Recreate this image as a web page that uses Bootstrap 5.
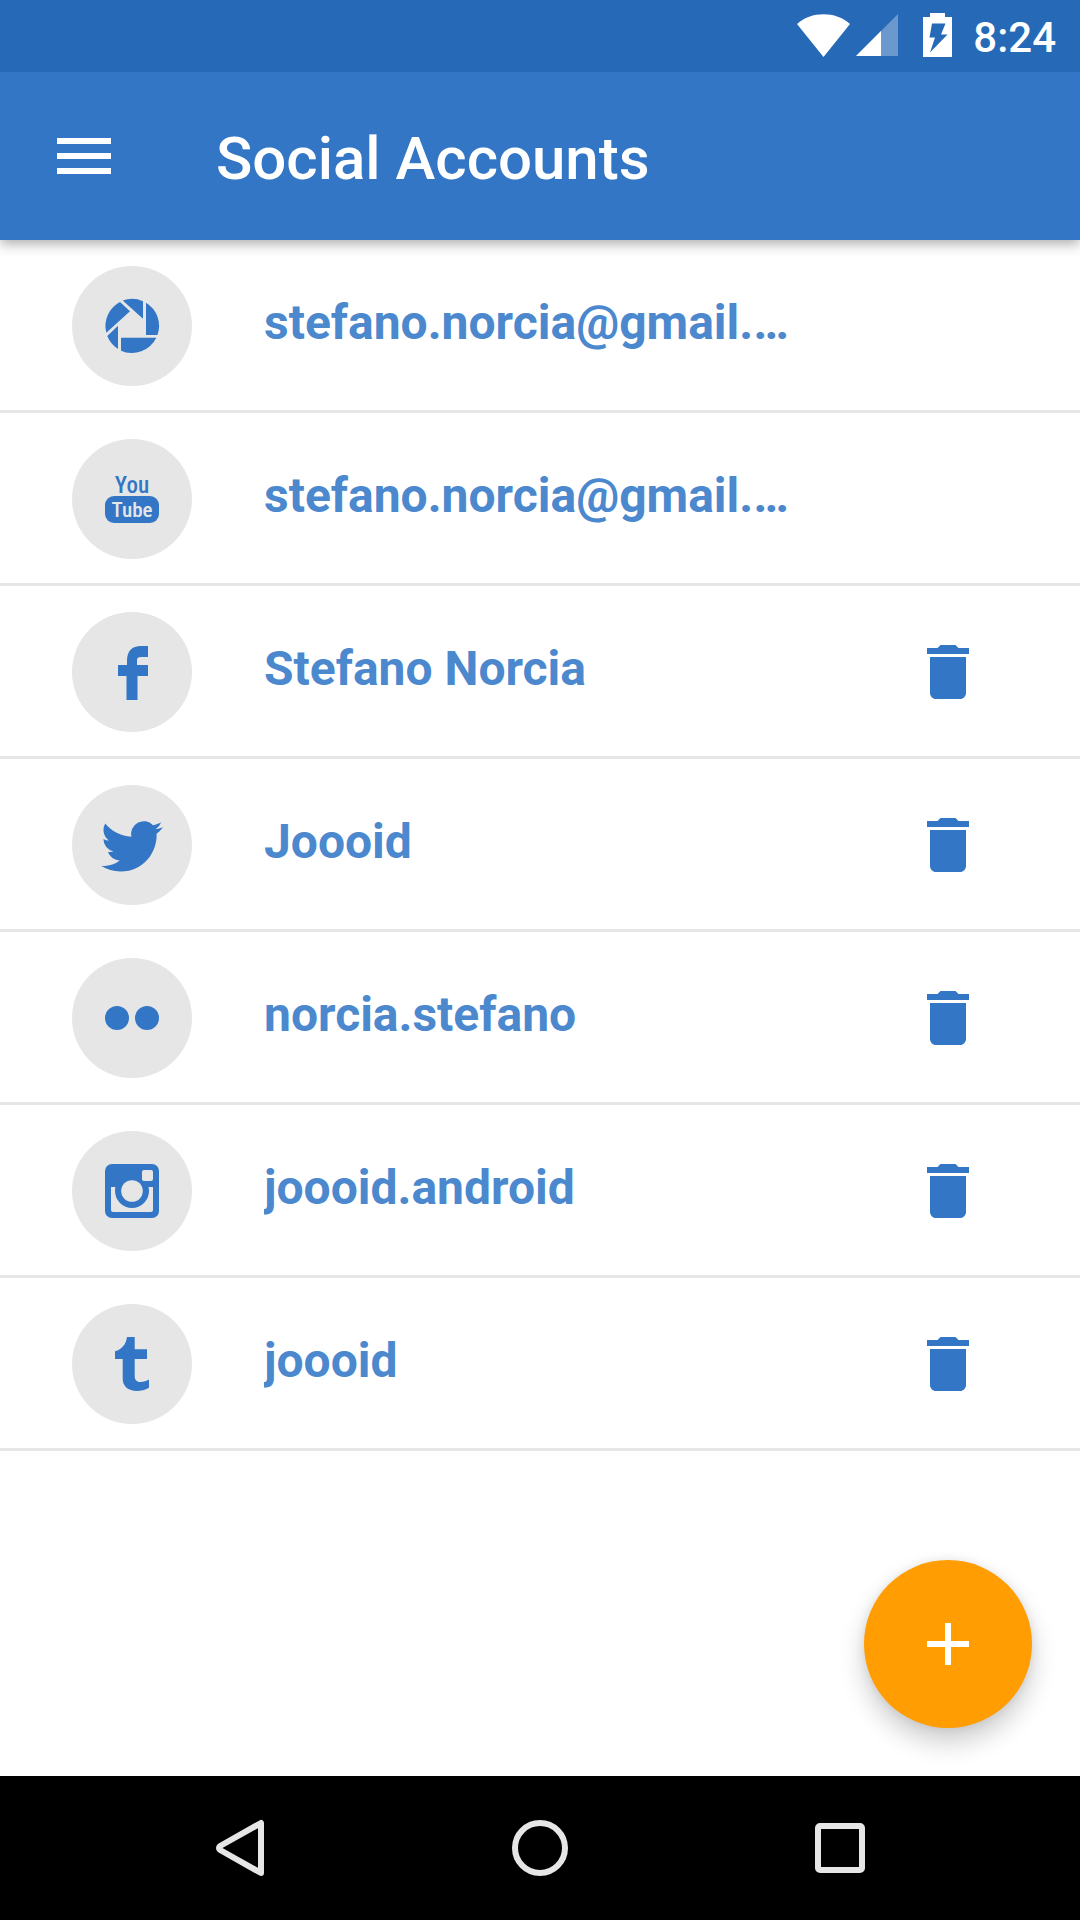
<!DOCTYPE html>
<html lang="en">
<head>
<meta charset="utf-8">
<meta name="viewport" content="width=device-width, initial-scale=1">
<title>Social Accounts</title>
<link href="https://cdn.jsdelivr.net/npm/bootstrap@5.3.0/dist/css/bootstrap.min.css" rel="stylesheet">
<script src="https://cdn.jsdelivr.net/npm/bootstrap@5.3.0/dist/js/bootstrap.bundle.min.js" defer></script>
<style>
  :root { --brand: #3276c5; --brand-dark: #2669b7; --disc: #e6e6e6; }
  body { font-family: Roboto, "Noto Sans", sans-serif; background: #fff; }
  svg { display: block; flex: none; }
  .status-bar { height: 72px; padding: 0 24px 2px; background: var(--brand-dark); color: #fff; z-index: 3; }
  .status-time { font-size: 42px; font-weight: 500; line-height: 48px; padding-top: 5px; margin-left: 21px; }
  .status-battery { margin-left: 25px; }
  .status-signal { margin-left: 6px; }
  .app-bar { height: 168px; padding: 0 48px; background: var(--brand); color: #fff; box-shadow: 0 4px 12px rgba(0,0,0,.32); z-index: 2; }
  .app-title { font-size: 60px; font-weight: 500; line-height: 72px; margin: 0; padding-top: 5px; }
  .icon-btn { background: none; border: 0; padding: 0; color: inherit; }
  .menu-btn { width: 72px; margin-right: 96px; }
  .list-group > .list-group-item.account-row { padding: 26px 60px 24px 72px; gap: 72px; border-width: 0 0 3px; border-color: #e6e6e6; background: #fff; }
  .account-disc { width: 120px; height: 120px; background: var(--disc); color: var(--brand); flex: none; }
  .account-name { font-size: 48px; font-weight: 700; line-height: 60px; color: #4b88ce; padding-bottom: 6px; min-width: 0; }
  .account-action { width: 144px; height: 120px; color: var(--brand); flex: none; }
  .add-btn { right: 48px; bottom: 48px; width: 168px; height: 168px; background: #ff9d03; color: #fff; box-shadow: 0 14px 26px rgba(0,0,0,.2), 0 0 10px rgba(0,0,0,.08); }
  .system-nav { height: 144px; padding: 0 90px; background: #000; color: #e6e6e6; }
</style>
</head>
<body>
<svg width="0" height="0" class="position-absolute" aria-hidden="true">
  <symbol id="trash" viewBox="0 0 24 24"><path fill="currentColor" d="M6 19c0 1.1.9 2 2 2h8c1.1 0 2-.9 2-2V7H6v12zM19 4h-3.5l-1-1h-5l-1 1H5v2h14V4z"/></symbol>
</svg>
<div class="d-flex flex-column min-vh-100">

  <div class="status-bar position-relative d-flex align-items-center justify-content-end">
    <svg width="53" height="43" viewBox="0 0 53 43" role="img" aria-label="Wi-Fi"><path fill="#fff" d="M0 10C14-3 39-3 53 10L26.500 43Z"/></svg>
    <svg class="status-signal" width="42" height="42" viewBox="0 0 42 42" role="img" aria-label="Signal"><path fill="#fff" opacity=".32" d="M42 0V42H0Z"/><path fill="#fff" d="M25 17V42H0Z"/></svg>
    <svg class="status-battery" width="29" height="44" viewBox="0 0 29 44" role="img" aria-label="Battery charging"><path fill="#fff" d="M7 0H22V4H29V44H0V4H7Z"/><path fill="#2669b7" d="M9 10.500H22.500L18 21.500H24.500L7 39.500L12 24.500H6.500Z"/></svg>
    <span class="status-time">8:24</span>
  </div>

  <header class="app-bar d-flex align-items-center position-relative">
    <button type="button" class="icon-btn menu-btn" aria-label="Menu">
      <svg width="72" height="72" viewBox="0 0 24 24"><path fill="currentColor" d="M3 18h18v-2H3v2zm0-5h18v-2H3v2zm0-7v2h18V6H3z"/></svg>
    </button>
    <h1 class="app-title text-truncate">Social Accounts</h1>
  </header>

  <main class="flex-grow-1 position-relative">
    <ul class="list-group list-group-flush">
      <li class="list-group-item account-row d-flex align-items-center">
        <div class="account-disc rounded-circle">
          <svg width="120" height="120" viewBox="0 0 120 120" role="img" aria-label="Picasa" fill="currentColor">
            <path d="M48 36L58 45.300L34.300 66.700A27 27 0 0 1 48 36Z"/>
            <path d="M50.700 34.600A27 27 0 0 1 71 35.300V52.700Z"/>
            <path d="M74 36.800A27 27 0 0 1 85.500 69H74Z"/>
            <path d="M49 71.700H84.300A27 27 0 0 1 49 84.700Z"/>
            <path d="M46 59.700V83A27 27 0 0 1 35.300 70Z"/>
          </svg>
        </div>
        <div class="account-name text-truncate flex-grow-1">stefano.norcia@gmail.…</div>
        <div class="account-action"></div>
      </li>
      <li class="list-group-item account-row d-flex align-items-center">
        <div class="account-disc rounded-circle">
          <svg width="120" height="120" viewBox="0 0 120 120" role="img" aria-label="YouTube" font-family="'Roboto Condensed', 'Open Sans Condensed', Roboto, sans-serif" font-weight="500" text-anchor="middle">
            <text x="60" y="54" font-size="23" fill="currentColor">You</text>
            <rect x="33" y="57" width="54" height="27" rx="9" fill="currentColor"/>
            <text x="60" y="78" font-size="21" fill="#e6e6e6">Tube</text>
          </svg>
        </div>
        <div class="account-name text-truncate flex-grow-1">stefano.norcia@gmail.…</div>
        <div class="account-action"></div>
      </li>
      <li class="list-group-item account-row d-flex align-items-center">
        <div class="account-disc rounded-circle">
          <svg width="120" height="120" viewBox="0 0 120 120" role="img" aria-label="Facebook" fill="currentColor"><path d="M54.500 88V64H46V53H55V49C55 39 60 34 69 34H76V45H69C66 45 65 46 65 48V53H76V64H65.500V88Z"/></svg>
        </div>
        <div class="account-name text-truncate flex-grow-1">Stefano Norcia</div>
        <button type="button" class="icon-btn account-action d-flex align-items-center justify-content-center" aria-label="Delete Stefano Norcia"><svg width="72" height="72"><use href="#trash"/></svg></button>
      </li>
      <li class="list-group-item account-row d-flex align-items-center">
        <div class="account-disc rounded-circle">
          <svg width="120" height="120" viewBox="0 0 120 120" role="img" aria-label="Twitter" fill="currentColor"><path transform="translate(29 30.400) scale(2.580)" d="M23.953 4.570a10 10 0 01-2.825.775 4.958 4.958 0 002.163-2.723c-.951.555-2.005.959-3.127 1.184a4.920 4.920 0 00-8.384 4.482C7.690 8.095 4.067 6.130 1.640 3.162a4.822 4.822 0 00-.666 2.475c0 1.710.870 3.213 2.188 4.096a4.904 4.904 0 01-2.228-.616v.060a4.923 4.923 0 003.946 4.827 4.996 4.996 0 01-2.212.085 4.936 4.936 0 004.604 3.417 9.867 9.867 0 01-6.102 2.105c-.390 0-.779-.023-1.170-.067a13.995 13.995 0 007.557 2.209c9.053 0 13.998-7.496 13.998-13.985 0-.210 0-.420-.015-.630A9.935 9.935 0 0024 4.590z"/></svg>
        </div>
        <div class="account-name text-truncate flex-grow-1">Joooid</div>
        <button type="button" class="icon-btn account-action d-flex align-items-center justify-content-center" aria-label="Delete Joooid"><svg width="72" height="72"><use href="#trash"/></svg></button>
      </li>
      <li class="list-group-item account-row d-flex align-items-center">
        <div class="account-disc rounded-circle">
          <svg width="120" height="120" viewBox="0 0 120 120" role="img" aria-label="Flickr" fill="currentColor"><circle cx="45" cy="60" r="12"/><circle cx="75" cy="60" r="12"/></svg>
        </div>
        <div class="account-name text-truncate flex-grow-1">norcia.stefano</div>
        <button type="button" class="icon-btn account-action d-flex align-items-center justify-content-center" aria-label="Delete norcia.stefano"><svg width="72" height="72"><use href="#trash"/></svg></button>
      </li>
      <li class="list-group-item account-row d-flex align-items-center">
        <div class="account-disc rounded-circle">
          <svg width="120" height="120" viewBox="0 0 120 120" role="img" aria-label="Instagram" fill="currentColor">
            <rect x="33" y="33" width="54" height="54" rx="7"/>
            <path fill="#e6e6e6" d="M39 56H81V79Q81 81 79 81H41Q39 81 39 79Z"/>
            <circle cx="60" cy="60" r="17"/>
            <circle cx="60" cy="60" r="10.800" fill="#e6e6e6"/>
            <rect x="70" y="39" width="11" height="11" rx="2" fill="#e6e6e6"/>
          </svg>
        </div>
        <div class="account-name text-truncate flex-grow-1">joooid.android</div>
        <button type="button" class="icon-btn account-action d-flex align-items-center justify-content-center" aria-label="Delete joooid.android"><svg width="72" height="72"><use href="#trash"/></svg></button>
      </li>
      <li class="list-group-item account-row d-flex align-items-center">
        <div class="account-disc rounded-circle">
          <svg width="120" height="120" viewBox="0 0 120 120" role="img" aria-label="Tumblr" fill="currentColor"><path d="M55 33H62.700V45.300H75V55H62.700V72C62.700 76 65 78 68.500 78C71.500 78 74.500 77 77 75.500V83.700C73 86 69 87 65 87C56 87 50.700 82 50.700 75V55H43V47.300C50 45.500 54 40 55 33Z"/></svg>
        </div>
        <div class="account-name text-truncate flex-grow-1">joooid</div>
        <button type="button" class="icon-btn account-action d-flex align-items-center justify-content-center" aria-label="Delete joooid"><svg width="72" height="72"><use href="#trash"/></svg></button>
      </li>
    </ul>
    <button type="button" class="icon-btn add-btn position-absolute rounded-circle d-flex align-items-center justify-content-center" aria-label="Add account">
      <svg width="72" height="72" viewBox="0 0 24 24"><path fill="currentColor" d="M19 13h-6v6h-2v-6H5v-2h6V5h2v6h6v2z"/></svg>
    </button>
  </main>

  <nav class="system-nav d-flex" aria-label="System">
    <button type="button" class="icon-btn flex-fill d-flex align-items-center justify-content-center" aria-label="Back">
      <svg width="60" height="60" viewBox="0 0 60 60" fill="none" stroke="currentColor" stroke-width="6" stroke-linejoin="round"><path d="M51 5V55L11 32.500Q7 30 11 27.500Z"/></svg>
    </button>
    <button type="button" class="icon-btn flex-fill d-flex align-items-center justify-content-center" aria-label="Home">
      <svg width="60" height="60" viewBox="0 0 60 60" fill="none" stroke="currentColor" stroke-width="6"><circle cx="30" cy="30" r="25"/></svg>
    </button>
    <button type="button" class="icon-btn flex-fill d-flex align-items-center justify-content-center" aria-label="Recent apps">
      <svg width="60" height="60" viewBox="0 0 60 60" fill="none" stroke="currentColor" stroke-width="6"><rect x="8" y="8" width="44" height="44" rx="2"/></svg>
    </button>
  </nav>
</div>
</body>
</html>
